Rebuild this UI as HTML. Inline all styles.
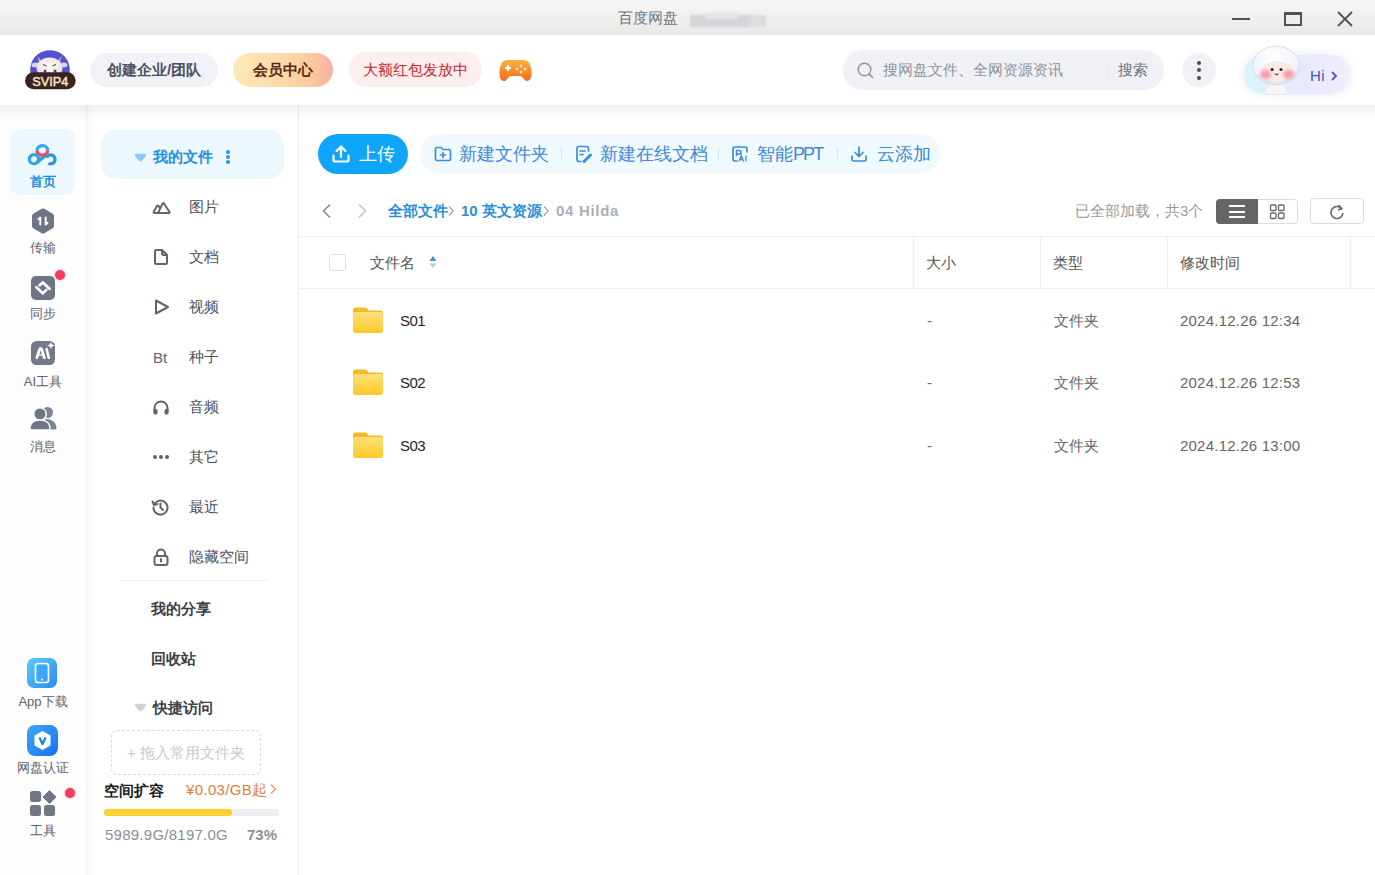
<!DOCTYPE html>
<html><head><meta charset="utf-8">
<style>
*{margin:0;padding:0;box-sizing:border-box}
html,body{width:1375px;height:875px;overflow:hidden;background:#fff;font-family:"Liberation Sans",sans-serif;}
.a{position:absolute}
.t{position:absolute;white-space:nowrap;line-height:1}
#title{left:0;top:0;width:1375px;height:35px;background:linear-gradient(#f7f7f7,#e8e8e6)}
#hdr{left:0;top:35px;width:1375px;height:70px;background:#fff}
#hshadow{left:0;top:105px;width:1375px;height:15px;background:linear-gradient(rgba(0,0,0,0.05) 0px,rgba(0,0,0,0.04) 6px,rgba(0,0,0,0.02) 7px,rgba(0,0,0,0.01) 12px,rgba(0,0,0,0) 15px);z-index:3}
#rail{left:0;top:105px;width:87px;height:770px;background:#fdfdfd;border-right:1px solid #efefef}
#side{left:87px;top:105px;width:212px;height:770px;background:linear-gradient(90deg,#f6f6f6 0px,#fbfbfb 4px,#fff 10px);border-right:1px solid #ececec}
.pill{position:absolute;border-radius:17px;font-size:15px;line-height:34px;text-align:center;white-space:nowrap}
</style></head><body>
<!-- title bar -->
<div id="title" class="a">
  <div class="t" style="left:618px;top:10px;font-size:15px;color:#70747f">百度网盘</div>
  <div class="a" style="left:690px;top:15px;width:60px;height:12px;background:#d3d4d8;filter:blur(1.2px)"></div><div class="a" style="left:748px;top:15px;width:18px;height:12px;background:#dcdde0;filter:blur(1.2px)"></div><div class="a" style="left:705px;top:13px;width:34px;height:6px;background:#e4e4e6;filter:blur(1.5px)"></div>
  <div class="a" style="left:1232px;top:18px;width:18px;height:2px;background:#505156"></div>
  <div class="a" style="left:1284px;top:12px;width:18px;height:14px;border:2px solid #505156;border-top-width:3px"></div>
  <svg class="a" style="left:1336px;top:10px" width="18" height="18" viewBox="0 0 18 18"><path d="M2 2L16 16M16 2L2 16" stroke="#505156" stroke-width="1.8"/></svg>
</div>
<div id="hdr" class="a">
  <!-- svip logo -->
  <svg class="a" style="left:22px;top:13px" width="56" height="44" viewBox="22 48 56 44">
    <defs><radialGradient id="cw" cx="0.5" cy="0.45" r="0.6"><stop offset="0" stop-color="#fffaf6"/><stop offset="0.7" stop-color="#f1e6ea"/><stop offset="1" stop-color="#d8cde0"/></radialGradient></defs>
    <path d="M32.9 80 A19.8 19.8 0 1 1 67.1 80Z" fill="#5053cf"/>
    <path d="M37.5 56 L42.5 62 L39.5 63.5Z M61.5 56 L56.5 62 L59.5 63.5Z" fill="#d6b068"/>
    <ellipse cx="35.5" cy="65" rx="4" ry="2.5" fill="#d8d0e4"/>
    <ellipse cx="63.5" cy="65" rx="4" ry="2.5" fill="#d8d0e4"/>
    <ellipse cx="49.5" cy="68" rx="13" ry="10.5" fill="url(#cw)"/>
    <path d="M43 64.5l3.5 1.5M56 64.5l-3.5 1.5" stroke="#5a4848" stroke-width="1.3"/>
    <circle cx="45" cy="71" r="1.5" fill="#4a4a4a"/><circle cx="55" cy="71" r="1.5" fill="#4a4a4a"/>
    <rect x="25" y="72.3" width="50.7" height="17" rx="8.5" fill="#3a221f"/>
    <text x="50.3" y="86.2" text-anchor="middle" font-family="Liberation Sans" font-size="13" fill="#f6e2c6" stroke="#f6e2c6" stroke-width="0.5" textLength="36" lengthAdjust="spacingAndGlyphs">SVIP4</text>
  </svg>
  <div class="pill" style="left:90px;top:18px;width:128px;height:34px;background:#f0f2f7;color:#4b505e;font-weight:bold">创建企业/团队</div>
  <div class="pill" style="left:233px;top:18px;width:100px;height:34px;background:linear-gradient(90deg,#fde9b8 0%,#fdd9a8 50%,#fcc69c 82%,#f9adab 100%);color:#5a2a0e;font-weight:bold">会员中心</div>
  <div class="pill" style="left:349px;top:17px;width:133px;height:35px;line-height:35px;background:#fdeeee;color:#c9252e">大额红包发放中</div>
  <!-- game -->
  <svg class="a" style="left:499px;top:24px" width="33" height="23" viewBox="0 0 33 23">
    <defs><linearGradient id="gm" x1="0" y1="0" x2="0" y2="1"><stop offset="0" stop-color="#fbb040"/><stop offset="1" stop-color="#ef6c1a"/></linearGradient></defs>
    <path d="M8 1 H25 C30 1 32 6 32.5 12 C33 19 31 22 28 22 C25 22 24 17 21 17 H12 C9 17 8 22 5 22 C2 22 0 19 0.5 12 C1 6 3 1 8 1Z" fill="url(#gm)"/>
    <path d="M6 9H12M9 6V12" stroke="#fff" stroke-width="2.2"/>
    <circle cx="22" cy="7" r="1.5" fill="#fde0b0"/><circle cx="26" cy="10" r="1.5" fill="#fde0b0"/><circle cx="22" cy="13" r="1.5" fill="#fde0b0"/><circle cx="18" cy="10" r="1.5" fill="#fde0b0"/>
  </svg>
  <!-- search -->
  <div class="a" style="left:843px;top:15px;width:321px;height:40px;border-radius:20px;background:#f0f1f6"></div>
  <svg class="a" style="left:856px;top:26px" width="19" height="19" viewBox="0 0 19 19"><circle cx="8.5" cy="8.5" r="6.3" fill="none" stroke="#9297a3" stroke-width="1.5"/><path d="M13.2 13.2L16.5 16.5" stroke="#9297a3" stroke-width="1.7" stroke-linecap="round"/></svg>
  <div class="t" style="left:883px;top:27px;font-size:15px;color:#8d919c">搜网盘文件、全网资源资讯</div>
  <div class="a" style="left:1108px;top:26px;width:1px;height:18px;background:#e7e8ed"></div>
  <div class="t" style="left:1118px;top:27px;font-size:15px;color:#6e7380">搜索</div>
  <!-- more -->
  <div class="a" style="left:1182px;top:18px;width:34px;height:34px;border-radius:17px;background:#eff1f5"></div>
  <div class="a" style="left:1197px;top:26px;width:4px;height:4px;border-radius:2px;background:#454b5a"></div>
  <div class="a" style="left:1197px;top:33px;width:4px;height:4px;border-radius:2px;background:#454b5a"></div>
  <div class="a" style="left:1197px;top:41px;width:4px;height:4px;border-radius:2px;background:#454b5a"></div>
  <!-- hi -->
  <div class="a" style="left:1244px;top:20px;width:106px;height:39px;border-radius:20px;background:linear-gradient(90deg,#d9f6fb 0%,#e6e8fc 45%,#efeefd 100%);box-shadow:0 0 8px rgba(225,228,250,0.9)"></div>
  <svg class="a" style="left:1248px;top:5px" width="56" height="61" viewBox="1248 40 56 61">
    <defs><radialGradient id="hm" cx="0.45" cy="0.3" r="0.7"><stop offset="0" stop-color="#ffffff"/><stop offset="0.75" stop-color="#f1f3f7"/><stop offset="1" stop-color="#dde1e8"/></radialGradient>
    <filter id="bl" x="-50%" y="-50%" width="200%" height="200%"><feGaussianBlur stdDeviation="1.8"/></filter>
    <filter id="bl2" x="-20%" y="-20%" width="140%" height="140%"><feGaussianBlur stdDeviation="0.5"/></filter></defs>
    <g filter="url(#bl2)">
    <path d="M1265 94.5 Q1265 83 1276 83 Q1287.5 83 1287.5 94.5Z" fill="#f4f5f9" stroke="#e2e5eb" stroke-width="0.8"/>
    <ellipse cx="1276.2" cy="65.4" rx="23.5" ry="19.3" fill="url(#hm)" stroke="#d8dce4" stroke-width="1"/>
    <ellipse cx="1277" cy="72" rx="16" ry="10" fill="#fde9e7" stroke="#e8e0e0" stroke-width="0.6"/>
    </g>
    <ellipse cx="1265.5" cy="74.5" rx="5.5" ry="4.5" fill="#f6929f" filter="url(#bl)" opacity="0.85"/>
    <ellipse cx="1288.5" cy="74.5" rx="5.5" ry="4.5" fill="#f6929f" filter="url(#bl)" opacity="0.85"/>
    <circle cx="1272.1" cy="69.5" r="1.5" fill="#1a1a1a"/><circle cx="1281" cy="69.5" r="1.5" fill="#1a1a1a"/>
    <path d="M1275 73.6 Q1276.7 75.6 1278.4 73.6" stroke="#7a3a3a" stroke-width="1.2" fill="none"/>
  </svg>
  <div class="t" style="left:1310px;top:33px;font-size:15px;color:#4d4fc0;letter-spacing:0.3px">Hi</div>
  <svg class="a" style="left:1330px;top:35px" width="9" height="12" viewBox="0 0 9 12"><path d="M2 2L6 6L2 10" stroke="#5a4ec0" stroke-width="1.8" fill="none"/></svg>
</div>
<div id="hshadow" class="a"></div>
<div id="rail" class="a"></div>
<div class="a" style="left:0;top:0;width:86px;height:875px;z-index:2">
  <div class="a" style="left:10px;top:129px;width:65px;height:66px;border-radius:10px;background:#edf7fe"></div>
  <svg class="a" style="left:26px;top:140px" width="34" height="30" viewBox="26 140 34 30">
    <circle cx="34" cy="159.2" r="4.6" fill="none" stroke="#2ba6e6" stroke-width="3.3"/>
    <path d="M46.42 157.50 A4.5 4.5 0 1 1 48.39 163.37" fill="none" stroke="#2399e0" stroke-width="3.3"/>
    <path d="M36.8 162.6 L46.8 154.4" stroke="#2ba2e4" stroke-width="3.3"/>
    <path d="M36.90 150.43 A5.5 5.5 0 0 1 47.80 150.43" fill="none" stroke="#36a6e4" stroke-width="3.4"/>
    <path d="M47.80 150.43 A5.5 5.5 0 0 1 36.90 150.43" fill="none" stroke="#e2506e" stroke-width="3.4"/>
  </svg>
  <div class="t" style="left:0;width:86px;text-align:center;top:175px;font-size:13px;font-weight:bold;color:#1b8fe0">首页</div>
  <!-- transfer -->
  <svg class="a" style="left:31px;top:208px" width="24" height="26" viewBox="0 0 24 26"><path d="M12 3 L20.5 8 V18 L12 23 L3.5 18 V8Z" fill="#6f7585" stroke="#6f7585" stroke-width="5" stroke-linejoin="round"/><path d="M9.3 16.5V9.5L7.5 11.3M14.7 9.5V16.5L16.5 14.7" stroke="#fff" stroke-width="2" fill="none" stroke-linecap="round" stroke-linejoin="round"/></svg>
  <div class="t" style="left:0;width:86px;text-align:center;top:241px;font-size:13px;color:#5d616c">传输</div>
  <!-- sync -->
  <svg class="a" style="left:30px;top:275px" width="26" height="26" viewBox="30 275 26 26"><rect x="31" y="276" width="24" height="24" rx="5" fill="#6f7585"/><path d="M36.3 287.2 L42.8 293.2 L46.3 290" stroke="#fff" stroke-width="2.7" fill="none" stroke-linejoin="miter" stroke-linecap="round"/><path d="M39.6 285.2 L42.8 282.6 L49.6 288.8" stroke="#fff" stroke-width="2.7" fill="none" stroke-linejoin="miter" stroke-linecap="round"/></svg>
  <div class="a" style="left:55px;top:270px;width:10px;height:10px;border-radius:5px;background:#f03d5a;box-shadow:0 0 3px rgba(240,60,90,0.5)"></div>
  <div class="t" style="left:0;width:86px;text-align:center;top:307px;font-size:13px;color:#5d616c">同步</div>
  <!-- ai -->
  <svg class="a" style="left:30px;top:340px" width="27" height="26" viewBox="30 340 27 26"><rect x="31" y="341" width="24" height="24" rx="5.5" fill="#737989"/><path d="M36.8 357.8 L39.3 350 Q40.6 346.8 41.9 350 L44.4 357.8" fill="none" stroke="#fff" stroke-width="2.7" stroke-linecap="round" stroke-linejoin="round"/><path d="M38.2 355 H43" stroke="#fff" stroke-width="1.4"/><path d="M46.6 349 L48.8 357.8" stroke="#fff" stroke-width="2.6" stroke-linecap="round"/><path d="M50.9 341.8 Q51.4 344.9 54.5 345.5 Q51.4 346.1 50.9 349.2 Q50.4 346.1 47.3 345.5 Q50.4 344.9 50.9 341.8Z" fill="#fff"/></svg>
  <div class="t" style="left:0;width:86px;text-align:center;top:375px;font-size:13px;color:#5d616c">AI工具</div>
  <!-- msg -->
  <svg class="a" style="left:29px;top:405px" width="29" height="26" viewBox="0 0 29 26"><circle cx="18.5" cy="7.5" r="5.5" fill="#7d8392"/><path d="M16 14 C22 13.5 27.5 17 27.5 23 Q27.5 24.5 26 24.5 H19Z" fill="#7d8392"/><circle cx="11" cy="9" r="6.3" fill="#6f7585" stroke="#fbfbfb" stroke-width="1.6"/><path d="M1 23.5 C1 18 5 15 11 15 C17 15 21 18 21 23.5 Q21 25 19.5 25 H2.5 Q1 25 1 23.5Z" fill="#6f7585" stroke="#fbfbfb" stroke-width="1.4"/></svg>
  <div class="t" style="left:0;width:86px;text-align:center;top:440px;font-size:13px;color:#5d616c">消息</div>
  <!-- app -->
  <svg class="a" style="left:27px;top:658px" width="30" height="30" viewBox="0 0 30 30"><defs><linearGradient id="ap" x1="0" y1="0" x2="1" y2="1"><stop offset="0" stop-color="#5ccaf8"/><stop offset="1" stop-color="#2a8cf0"/></linearGradient></defs><rect width="30" height="30" rx="7" fill="url(#ap)"/><rect x="8.5" y="5.5" width="13" height="19" rx="2.5" fill="none" stroke="#fff" stroke-width="1.6"/><rect x="10.5" y="8" width="9" height="11" rx="1" fill="#3aa8f4"/><circle cx="15" cy="21.5" r="1" fill="#fff"/></svg>
  <div class="t" style="left:0;width:86px;text-align:center;top:695px;font-size:13px;color:#5d616c">App下载</div>
  <!-- verify -->
  <svg class="a" style="left:27px;top:725px" width="31" height="31" viewBox="0 0 31 31"><defs><linearGradient id="vf" x1="0" y1="0" x2="1" y2="1"><stop offset="0" stop-color="#3ba8f8"/><stop offset="1" stop-color="#1a6ff0"/></linearGradient></defs><rect width="31" height="31" rx="8" fill="url(#vf)"/><path d="M15.5 6 L23.5 10.5 V20.5 L15.5 25 L7.5 20.5 V10.5Z" fill="#fff"/><path d="M12.5 12.5 L15.5 19 L18.5 12.5" stroke="#1a78f0" stroke-width="2.2" fill="none" stroke-linejoin="round"/></svg>
  <div class="t" style="left:0;width:86px;text-align:center;top:761px;font-size:13px;color:#5d616c">网盘认证</div>
  <!-- tools -->
  <svg class="a" style="left:30px;top:790px" width="27" height="27" viewBox="0 0 27 27"><rect x="0" y="1" width="11" height="11" rx="2.5" fill="#707686"/><path d="M19.5 0.5 L26 7 L19.5 13.5 L13 7Z" fill="#707686" stroke="#707686" stroke-width="1" stroke-linejoin="round"/><rect x="0" y="15" width="11" height="11" rx="2.5" fill="#707686"/><rect x="14" y="15" width="11" height="11" rx="2.5" fill="#707686"/></svg>
  <div class="a" style="left:65px;top:788px;width:10px;height:10px;border-radius:5px;background:#f03d5a;box-shadow:0 0 3px rgba(240,60,90,0.5)"></div>
  <div class="t" style="left:0;width:86px;text-align:center;top:824px;font-size:13px;color:#5d616c">工具</div>
</div>
<div id="side" class="a"></div>
<div class="a" style="left:0;top:0;width:299px;height:875px;z-index:2">
  <div class="a" style="left:101px;top:130px;width:183px;height:49px;border-radius:15px;background:#ecf7fe"></div>
  <svg class="a" style="left:134px;top:153px" width="13" height="9" viewBox="0 0 13 9"><path d="M2.5 0.8 H10.5 Q12.8 0.8 11.8 2.8 Q9.8 6.2 7.4 7.9 Q6.5 8.5 5.6 7.9 Q3.2 6.2 1.2 2.8 Q0.2 0.8 2.5 0.8Z" fill="#84cbf5"/></svg>
  <div class="t" style="left:153px;top:149px;font-size:15px;font-weight:bold;color:#1f8fe0">我的文件</div>
  <div class="a" style="left:226px;top:150px;width:4px;height:4px;border-radius:2px;background:#2a95e0"></div>
  <div class="a" style="left:226px;top:155px;width:4px;height:4px;border-radius:2px;background:#2a95e0"></div>
  <div class="a" style="left:226px;top:160px;width:4px;height:4px;border-radius:2px;background:#2a95e0"></div>
  <!-- items -->
  <svg class="a" style="left:152px;top:199px" width="20" height="16" viewBox="0 0 20 16"><path d="M7.5 14 H2.5 Q1.2 14 1.8 12.8 L5 7 Q5.8 5.8 6.6 7 L7.6 8.6 M6 14 L10.6 4.5 Q11.3 3.3 12 4.5 L17.4 12.8 Q18 14 16.7 14 H6" fill="none" stroke="#5f6470" stroke-width="2" stroke-linejoin="round" stroke-linecap="round"/></svg>
  <div class="t" style="left:189px;top:199px;font-size:15px;color:#4c505c">图片</div>
  <svg class="a" style="left:152px;top:248px" width="18" height="18" viewBox="0 0 18 18"><path d="M3 3.5 Q3 2 4.5 2 H10 L15 7 V14.5 Q15 16 13.5 16 H4.5 Q3 16 3 14.5Z M10 2 V5.5 Q10 7 11.5 7 H15" fill="none" stroke="#5f6470" stroke-width="2" stroke-linejoin="round"/></svg>
  <div class="t" style="left:189px;top:249px;font-size:15px;color:#4c505c">文档</div>
  <svg class="a" style="left:153px;top:298px" width="18" height="18" viewBox="0 0 18 18"><path d="M3 2.5 L15 9 L3 15.5Z" fill="none" stroke="#5f6470" stroke-width="2" stroke-linejoin="round"/></svg>
  <div class="t" style="left:189px;top:299px;font-size:15px;color:#4c505c">视频</div>
  <div class="t" style="left:153px;top:350px;font-size:15px;color:#5f6470">Bt</div>
  <div class="t" style="left:189px;top:349px;font-size:15px;color:#4c505c">种子</div>
  <svg class="a" style="left:152px;top:399px" width="18" height="18" viewBox="0 0 18 18"><path d="M2.5 13 V9 A6.5 6.5 0 0 1 15.5 9 V13" fill="none" stroke="#5f6470" stroke-width="2"/><rect x="1.5" y="10" width="4" height="5.5" rx="1.5" fill="#5f6470"/><rect x="12.5" y="10" width="4" height="5.5" rx="1.5" fill="#5f6470"/></svg>
  <div class="t" style="left:189px;top:399px;font-size:15px;color:#4c505c">音频</div>
  <div class="a" style="left:153px;top:455px;width:4px;height:4px;border-radius:2px;background:#5f6470"></div>
  <div class="a" style="left:159px;top:455px;width:4px;height:4px;border-radius:2px;background:#5f6470"></div>
  <div class="a" style="left:165px;top:455px;width:4px;height:4px;border-radius:2px;background:#5f6470"></div>
  <div class="t" style="left:189px;top:449px;font-size:15px;color:#4c505c">其它</div>
  <svg class="a" style="left:151px;top:498px" width="19" height="19" viewBox="0 0 19 19"><path d="M3.2 6.5 A7 7 0 1 1 2.5 9.5" fill="none" stroke="#5f6470" stroke-width="2" stroke-linecap="round"/><path d="M1.5 3.5 L3 7 L6.5 6" fill="none" stroke="#5f6470" stroke-width="2" stroke-linecap="round" stroke-linejoin="round"/><path d="M9.5 5.5 V9.5 L12 12" fill="none" stroke="#5f6470" stroke-width="2" stroke-linecap="round"/></svg>
  <div class="t" style="left:189px;top:499px;font-size:15px;color:#4c505c">最近</div>
  <svg class="a" style="left:152px;top:548px" width="18" height="18" viewBox="0 0 18 18"><path d="M5 8 V5.5 A4 4 0 0 1 13 5.5 V8" fill="none" stroke="#5f6470" stroke-width="2"/><rect x="2.5" y="8" width="13" height="9" rx="2" fill="none" stroke="#5f6470" stroke-width="2"/><path d="M9 11 V13.5" stroke="#5f6470" stroke-width="2" stroke-linecap="round"/></svg>
  <div class="t" style="left:189px;top:549px;font-size:15px;color:#4c505c">隐藏空间</div>
  <div class="a" style="left:120px;top:580px;width:148px;height:1px;background:#f0f0f2"></div>
  <div class="t" style="left:151px;top:601px;font-size:15px;font-weight:bold;color:#3b3f49">我的分享</div>
  <div class="t" style="left:151px;top:651px;font-size:15px;font-weight:bold;color:#3b3f49">回收站</div>
  <svg class="a" style="left:134px;top:703px" width="13" height="9" viewBox="0 0 13 9"><path d="M2.5 0.8 H10.5 Q12.8 0.8 11.8 2.8 Q9.8 6.2 7.4 7.9 Q6.5 8.5 5.6 7.9 Q3.2 6.2 1.2 2.8 Q0.2 0.8 2.5 0.8Z" fill="#cdd0db"/></svg>
  <div class="t" style="left:153px;top:700px;font-size:15px;font-weight:bold;color:#3b3f49">快捷访问</div>
  <div class="a" style="left:111px;top:730px;width:150px;height:45px;border:1px dashed #d6d9e0;border-radius:6px"></div>
  <div class="t" style="left:127px;top:745px;font-size:15px;color:#c6c9d1">+ 拖入常用文件夹</div>
  <div class="t" style="left:104px;top:783px;font-size:15px;font-weight:bold;color:#1a1d26">空间扩容</div>
  <div class="t" style="left:186px;top:782px;font-size:15px;color:#e27c3e;letter-spacing:0.35px">¥0.03/GB起</div>
  <svg class="a" style="left:269px;top:783px" width="9" height="12" viewBox="0 0 9 12"><path d="M2 1.5L6.5 6L2 10.5" stroke="#e9915a" stroke-width="1.2" fill="none"/></svg>
  <div class="a" style="left:104px;top:809px;width:175px;height:7px;border-radius:4px;background:#eceef3"></div>
  <div class="a" style="left:104px;top:809px;width:128px;height:7px;border-radius:4px;background:#f9d230"></div>
  <div class="t" style="left:105px;top:827px;font-size:15px;color:#8a909c;letter-spacing:0.25px">5989.9G/8197.0G</div>
  <div class="t" style="left:247px;top:827px;font-size:15px;font-weight:bold;color:#8a909c">73%</div>
</div>

<div class="a" style="left:299px;top:105px;width:1076px;height:770px;z-index:1">
</div>
<div class="a" style="left:0;top:0;width:1375px;height:875px;z-index:2">
  <!-- upload -->
  <div class="a" style="left:318px;top:134px;width:90px;height:40px;border-radius:20px;background:#0ea5fb"></div>
  <svg class="a" style="left:331px;top:144px" width="20" height="20" viewBox="0 0 20 20"><path d="M10 13 V2.5 M5.5 7 L10 2.5 L14.5 7" stroke="#fff" stroke-width="2.2" fill="none" stroke-linecap="round" stroke-linejoin="round"/><path d="M2.5 11.5 V16.5 Q2.5 17.5 3.5 17.5 H16.5 Q17.5 17.5 17.5 16.5 V11.5" stroke="#fff" stroke-width="2.2" fill="none" stroke-linecap="round"/></svg>
  <div class="t" style="left:359px;top:145px;font-size:18px;color:#fff">上传</div>
  <!-- tools pill -->
  <div class="a" style="left:420px;top:134px;width:520px;height:39px;border-radius:20px;background:#eff9fe"></div>
  <svg class="a" style="left:434px;top:146px" width="18" height="16" viewBox="0 0 18 16"><path d="M1.5 3 Q1.5 1.5 3 1.5 H7 L9 3.5 H15 Q16.5 3.5 16.5 5 V13 Q16.5 14.5 15 14.5 H3 Q1.5 14.5 1.5 13Z" fill="none" stroke="#3a8fd8" stroke-width="1.7" stroke-linejoin="round"/><path d="M9 6.5 V11.5 M6.5 9 H11.5" stroke="#3a8fd8" stroke-width="1.7" stroke-linecap="round"/></svg>
  <div class="t" style="left:459px;top:145px;font-size:18px;color:#3d8ad2">新建文件夹</div>
  <div class="a" style="left:561px;top:147px;width:1px;height:14px;background:#d3e3ef"></div>
  <svg class="a" style="left:575px;top:145px" width="18" height="18" viewBox="0 0 18 18"><path d="M13.5 6 V3.5 Q13.5 1.5 11.5 1.5 H4 Q2 1.5 2 3.5 V14.5 Q2 16.5 4 16.5 H6" fill="none" stroke="#3a8fd8" stroke-width="1.7" stroke-linecap="round"/><path d="M5 6 H10 M5 9.5 H8" stroke="#3a8fd8" stroke-width="1.7" stroke-linecap="round"/><path d="M9 16.5 L15.5 10" stroke="#3a8fd8" stroke-width="3" stroke-linecap="round"/></svg>
  <div class="t" style="left:600px;top:145px;font-size:18px;color:#3d8ad2">新建在线文档</div>
  <div class="a" style="left:718px;top:147px;width:1px;height:14px;background:#d3e3ef"></div>
  <svg class="a" style="left:731px;top:145px" width="18" height="18" viewBox="0 0 18 18"><path d="M16 7 V4 Q16 2 14 2 H4 Q2 2 2 4 V14 Q2 16 4 16 H6" fill="none" stroke="#3a8fd8" stroke-width="1.7" stroke-linecap="round"/><path d="M5.5 11 V5.5 H8 Q10 5.5 10 7.2 Q10 9 8 9 H5.5" fill="none" stroke="#3a8fd8" stroke-width="1.5"/><path d="M8 16.5 L10.3 10.5 L12.6 16.5 M9 14.5 H11.6 M15 10.5 V16.5" fill="none" stroke="#3a8fd8" stroke-width="1.3"/></svg>
  <div class="t" style="left:757px;top:145px;font-size:18px;color:#3d8ad2">智能<span style="letter-spacing:-1.9px">PPT</span></div>
  <div class="a" style="left:837px;top:147px;width:1px;height:14px;background:#d3e3ef"></div>
  <svg class="a" style="left:850px;top:145px" width="18" height="18" viewBox="0 0 18 18"><path d="M9 2 V11.5 M5 7.5 L9 11.5 L13 7.5" stroke="#3a8fd8" stroke-width="1.7" fill="none" stroke-linecap="round" stroke-linejoin="round"/><path d="M2 11 V14.5 Q2 16 3.5 16 H14.5 Q16 16 16 14.5 V11" stroke="#3a8fd8" stroke-width="1.7" fill="none" stroke-linecap="round"/></svg>
  <div class="t" style="left:877px;top:145px;font-size:18px;color:#3d8ad2">云添加</div>
  <!-- breadcrumb -->
  <svg class="a" style="left:320px;top:203px" width="12" height="16" viewBox="0 0 12 16"><path d="M10 1.5 L3.5 8 L10 14.5" stroke="#8a8d94" stroke-width="1.6" fill="none"/></svg>
  <svg class="a" style="left:357px;top:203px" width="12" height="16" viewBox="0 0 12 16"><path d="M2 1.5 L8.5 8 L2 14.5" stroke="#c2c4c9" stroke-width="1.6" fill="none"/></svg>
  <div class="t" style="left:388px;top:203px;font-size:15px;font-weight:bold;color:#2b8fd8">全部文件</div>
  <svg class="a" style="left:448px;top:205px" width="7" height="12" viewBox="0 0 7 12"><path d="M1 1.5 L5.2 6 L1 10.5" stroke="#9a9ca2" stroke-width="1.1" fill="none"/></svg>
  <div class="t" style="left:461px;top:203px;font-size:15px;font-weight:bold;color:#2b8fd8">10 英文资源</div>
  <svg class="a" style="left:543px;top:205px" width="7" height="12" viewBox="0 0 7 12"><path d="M1 1.5 L5.2 6 L1 10.5" stroke="#9a9ca2" stroke-width="1.1" fill="none"/></svg>
  <div class="t" style="left:556px;top:203px;font-size:15px;font-weight:bold;color:#a9aeb8;letter-spacing:0.7px">04 Hilda</div>
  <div class="t" style="left:1075px;top:203px;font-size:15px;color:#999">已全部加载，共3个</div>
  <!-- view toggle -->
  <div class="a" style="left:1216px;top:199px;width:82px;height:25px;border:1px solid #dcdcdc;border-radius:4px;background:#fff"></div>
  <div class="a" style="left:1216px;top:199px;width:42px;height:25px;border-radius:4px 0 0 4px;background:#666"></div>
  <div class="a" style="left:1229px;top:205px;width:16px;height:2px;background:#fff"></div>
  <div class="a" style="left:1229px;top:210.5px;width:16px;height:2px;background:#fff"></div>
  <div class="a" style="left:1229px;top:216px;width:16px;height:2px;background:#fff"></div>
  <svg class="a" style="left:1269px;top:204px" width="17" height="16" viewBox="0 0 17 16"><rect x="1.5" y="1" width="5.5" height="5.5" rx="1" fill="none" stroke="#666" stroke-width="1.3"/><rect x="9.5" y="1" width="5.5" height="5.5" rx="1" fill="none" stroke="#666" stroke-width="1.3"/><rect x="1.5" y="9" width="5.5" height="5.5" rx="1" fill="none" stroke="#666" stroke-width="1.3"/><rect x="9.5" y="9" width="5.5" height="5.5" rx="1" fill="none" stroke="#666" stroke-width="1.3"/></svg>
  <div class="a" style="left:1310px;top:198px;width:54px;height:26px;border:1px solid #dcdcdc;border-radius:4px;background:#fff"></div>
  <svg class="a" style="left:1328px;top:203px" width="18" height="18" viewBox="0 0 18 18"><path d="M13.5 5.5 A6 6 0 1 0 15 10" fill="none" stroke="#666" stroke-width="1.6"/><path d="M10.5 2 L13.8 5.6 L10 7" fill="none" stroke="#666" stroke-width="1.6"/></svg>
  <!-- table header -->
  <div class="a" style="left:299px;top:236px;width:1076px;height:1px;background:#f0f0f0"></div>
  <div class="a" style="left:299px;top:288px;width:1076px;height:1px;background:#eeeeee"></div>
  <div class="a" style="left:329px;top:254px;width:17px;height:17px;border:1px solid #dedede;border-radius:3px;background:#fff"></div>
  <div class="t" style="left:370px;top:255px;font-size:15px;color:#555">文件名</div>
  <svg class="a" style="left:428px;top:254px" width="10" height="16" viewBox="0 0 10 16"><path d="M5 2 L8.5 7 H1.5Z" fill="#2a98e0"/><path d="M5 14 L8.5 9.5 H1.5Z" fill="#c8c8c8"/></svg>
  <div class="a" style="left:913px;top:237px;width:1px;height:51px;background:#f0f0f0"></div>
  <div class="a" style="left:1040px;top:237px;width:1px;height:51px;background:#f0f0f0"></div>
  <div class="a" style="left:1167px;top:237px;width:1px;height:51px;background:#f0f0f0"></div>
  <div class="a" style="left:1350px;top:237px;width:1px;height:51px;background:#f0f0f0"></div>
  <div class="t" style="left:926px;top:255px;font-size:15px;color:#555">大小</div>
  <div class="t" style="left:1053px;top:255px;font-size:15px;color:#555">类型</div>
  <div class="t" style="left:1180px;top:255px;font-size:15px;color:#555">修改时间</div>

  <svg class="a" style="left:352px;top:305.75px" width="32" height="28" viewBox="0 0 32 28"><defs><linearGradient id="fdS01" x1="0" y1="0" x2="0" y2="1"><stop offset="0" stop-color="#ffe07a"/><stop offset="1" stop-color="#ffc828"/></linearGradient></defs><path d="M1 4 Q1 1.5 3.5 1.5 H13 Q14.5 1.5 15.5 3 L16.5 4.5 H28.5 Q31 4.5 31 7 V10 H1Z" fill="#f5ba22"/><path d="M1 8.5 Q1 6 3.5 6 H28.5 Q31 6 31 8.5 V24.5 Q31 27 28.5 27 H3.5 Q1 27 1 24.5Z" fill="url(#fdS01)"/></svg>
  <div class="t" style="left:400px;top:312.75px;font-size:15px;color:#1f2330;letter-spacing:-0.6px">S01</div>
  <div class="t" style="left:927px;top:312.75px;font-size:15px;color:#666">-</div>
  <div class="t" style="left:1054px;top:312.75px;font-size:15px;color:#666">文件夹</div>
  <div class="t" style="left:1180px;top:312.75px;font-size:15px;color:#666;letter-spacing:0.22px">2024.12.26 12:34</div>
  <svg class="a" style="left:352px;top:368.25px" width="32" height="28" viewBox="0 0 32 28"><defs><linearGradient id="fdS02" x1="0" y1="0" x2="0" y2="1"><stop offset="0" stop-color="#ffe07a"/><stop offset="1" stop-color="#ffc828"/></linearGradient></defs><path d="M1 4 Q1 1.5 3.5 1.5 H13 Q14.5 1.5 15.5 3 L16.5 4.5 H28.5 Q31 4.5 31 7 V10 H1Z" fill="#f5ba22"/><path d="M1 8.5 Q1 6 3.5 6 H28.5 Q31 6 31 8.5 V24.5 Q31 27 28.5 27 H3.5 Q1 27 1 24.5Z" fill="url(#fdS02)"/></svg>
  <div class="t" style="left:400px;top:375.25px;font-size:15px;color:#1f2330;letter-spacing:-0.6px">S02</div>
  <div class="t" style="left:927px;top:375.25px;font-size:15px;color:#666">-</div>
  <div class="t" style="left:1054px;top:375.25px;font-size:15px;color:#666">文件夹</div>
  <div class="t" style="left:1180px;top:375.25px;font-size:15px;color:#666;letter-spacing:0.22px">2024.12.26 12:53</div>
  <svg class="a" style="left:352px;top:430.75px" width="32" height="28" viewBox="0 0 32 28"><defs><linearGradient id="fdS03" x1="0" y1="0" x2="0" y2="1"><stop offset="0" stop-color="#ffe07a"/><stop offset="1" stop-color="#ffc828"/></linearGradient></defs><path d="M1 4 Q1 1.5 3.5 1.5 H13 Q14.5 1.5 15.5 3 L16.5 4.5 H28.5 Q31 4.5 31 7 V10 H1Z" fill="#f5ba22"/><path d="M1 8.5 Q1 6 3.5 6 H28.5 Q31 6 31 8.5 V24.5 Q31 27 28.5 27 H3.5 Q1 27 1 24.5Z" fill="url(#fdS03)"/></svg>
  <div class="t" style="left:400px;top:437.75px;font-size:15px;color:#1f2330;letter-spacing:-0.6px">S03</div>
  <div class="t" style="left:927px;top:437.75px;font-size:15px;color:#666">-</div>
  <div class="t" style="left:1054px;top:437.75px;font-size:15px;color:#666">文件夹</div>
  <div class="t" style="left:1180px;top:437.75px;font-size:15px;color:#666;letter-spacing:0.22px">2024.12.26 13:00</div>
</div>
</body></html>
